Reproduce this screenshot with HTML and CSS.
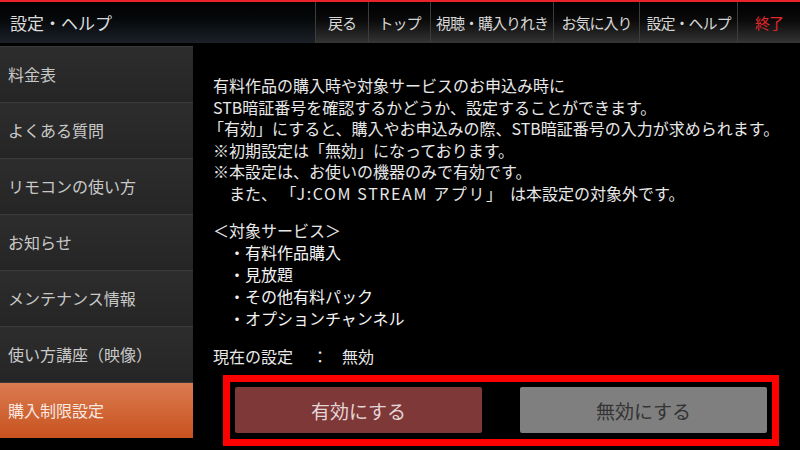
FILE: index.html
```html
<!DOCTYPE html>
<html lang="ja">
<head>
  <meta charset="UTF-8">
  <title>設定・ヘルプ</title>
  <link rel="stylesheet" href="styles.css">
</head>
<body>
  <div class="topline"></div>
  <header class="topbar">
    <div class="title">設定・ヘルプ</div>
    <nav class="nav">
      <div class="nav-item w-back">戻る</div>
      <div class="nav-item w-top">トップ</div>
      <div class="nav-item w-watch">視聴・購入りれき</div>
      <div class="nav-item w-fav">お気に入り</div>
      <div class="nav-item w-help">設定・ヘルプ</div>
      <div class="nav-item w-end exit">終了</div>
    </nav>
  </header>

  <div class="layout">
    <aside class="menu">
      <div class="menu-item">料金表</div>
      <div class="menu-item">よくある質問</div>
      <div class="menu-item">リモコンの使い方</div>
      <div class="menu-item">お知らせ</div>
      <div class="menu-item">メンテナンス情報</div>
      <div class="menu-item">使い方講座（映像）</div>
      <div class="menu-item active">購入制限設定</div>
    </aside>

    <main class="content">
      <div class="desc">
        <p>有料作品の購入時や対象サービスのお申込み時に</p>
        <p>STB暗証番号を確認するかどうか、設定することができます。</p>
        <p class="q">「有効」にすると、購入やお申込みの際、STB暗証番号の入力が求められます。</p>
        <p>※初期設定は「無効」になっております。</p>
        <p>※本設定は、お使いの機器のみで有効です。</p>
        <p class="indent">また、 「<span class="app">J:COM STREAM アプリ</span>」　は本設定の対象外です。</p>
      </div>

      <div class="services">
        <p>＜対象サービス＞</p>
        <ul>
          <li>・有料作品購入</li>
          <li>・見放題</li>
          <li>・その他有料パック</li>
          <li>・オプションチャンネル</li>
        </ul>
      </div>

      <div class="current">
        <span>現在の設定</span><span class="colon">：</span><span>無効</span>
      </div>

      <div class="choice">
        <button class="btn btn-on">有効にする</button>
        <button class="btn btn-off">無効にする</button>
      </div>
    </main>
  </div>
</body>
</html>
```

FILE: styles.css
```css
body {
  margin: 0;
  width: 800px;
  height: 450px;
  overflow: hidden;
  background-color: #000;
  color: #e8e8e8;
  font-family: "Noto Sans CJK JP", "Noto Sans", sans-serif;
}
.topline {
  height: 2px;
  background-color: #e8212b;
}
.topbar {
  display: flex;
  height: 41px;
}
.title {
  flex: 1;
  padding-left: 10px;
  font-size: 17px;
  line-height: 41px;
  color: #dcdcdc;
  background: linear-gradient(#000 0%, #05080a 40%, #1b2127 100%);
}
.nav {
  display: flex;
}
.nav-item {
  border-left: 1px solid #3c3c3c;
  font-size: 15px;
  letter-spacing: -1px;
  line-height: 41px;
  text-align: center;
  color: #d6d6d6;
  background: linear-gradient(#000 0%, #0a0a0a 45%, #343434 100%);
  box-sizing: border-box;
}
.w-back { width: 53px; }
.w-top { width: 62px; }
.w-watch { width: 123px; }
.w-fav { width: 86px; }
.w-help { width: 98px; }
.w-end { width: 63px; }
.exit {
  color: #e3272b;
}
.layout {
  display: flex;
}
.menu {
  width: 193px;
  padding-top: 3px;
}
.menu-item {
  height: 55px;
  border-top: 1px solid #3a3a3a;
  padding-left: 8px;
  font-size: 16px;
  line-height: 55px;
  color: #c8c8c8;
  background: linear-gradient(#2d2d2d, #252525);
}
.menu-item.active {
  color: #f6e8e0;
  background: linear-gradient(#da7b4f, #c8521f);
}
.content {
  flex: 1;
  padding: 32px 0 0 20px;
  font-size: 16px;
}
p {
  margin: 0;
}
.desc {
  line-height: 21.5px;
}
.desc .q {
  margin-left: -5px;
}
.desc .indent {
  padding-left: 16px;
}
.app {
  letter-spacing: 1.6px;
}
.services {
  margin-top: 15px;
  line-height: 22px;
}
.services ul {
  list-style: none;
  margin: 0;
  padding: 0 0 0 16px;
  color: #f4f4f4;
}
.current {
  margin-top: 16px;
  line-height: 22px;
}
.colon {
  display: inline-block;
  width: 44px;
  margin-left: 5px;
  text-align: center;
}
.choice {
  display: flex;
  gap: 38px;
  width: 556px;
  margin: 8px 0 0 10px;
  padding: 5px 5px 6px 5px;
  border: 7px solid #ff0000;
  box-sizing: border-box;
}
.btn {
  flex: 1;
  height: 46px;
  border: none;
  border-radius: 2px;
  font-family: inherit;
  font-size: 19px;
  padding: 0;
}
.btn-on {
  background-color: #7e3838;
  color: #e4d6d6;
}
.btn-off {
  background-color: #7f7f7f;
  color: #333;
}
```
